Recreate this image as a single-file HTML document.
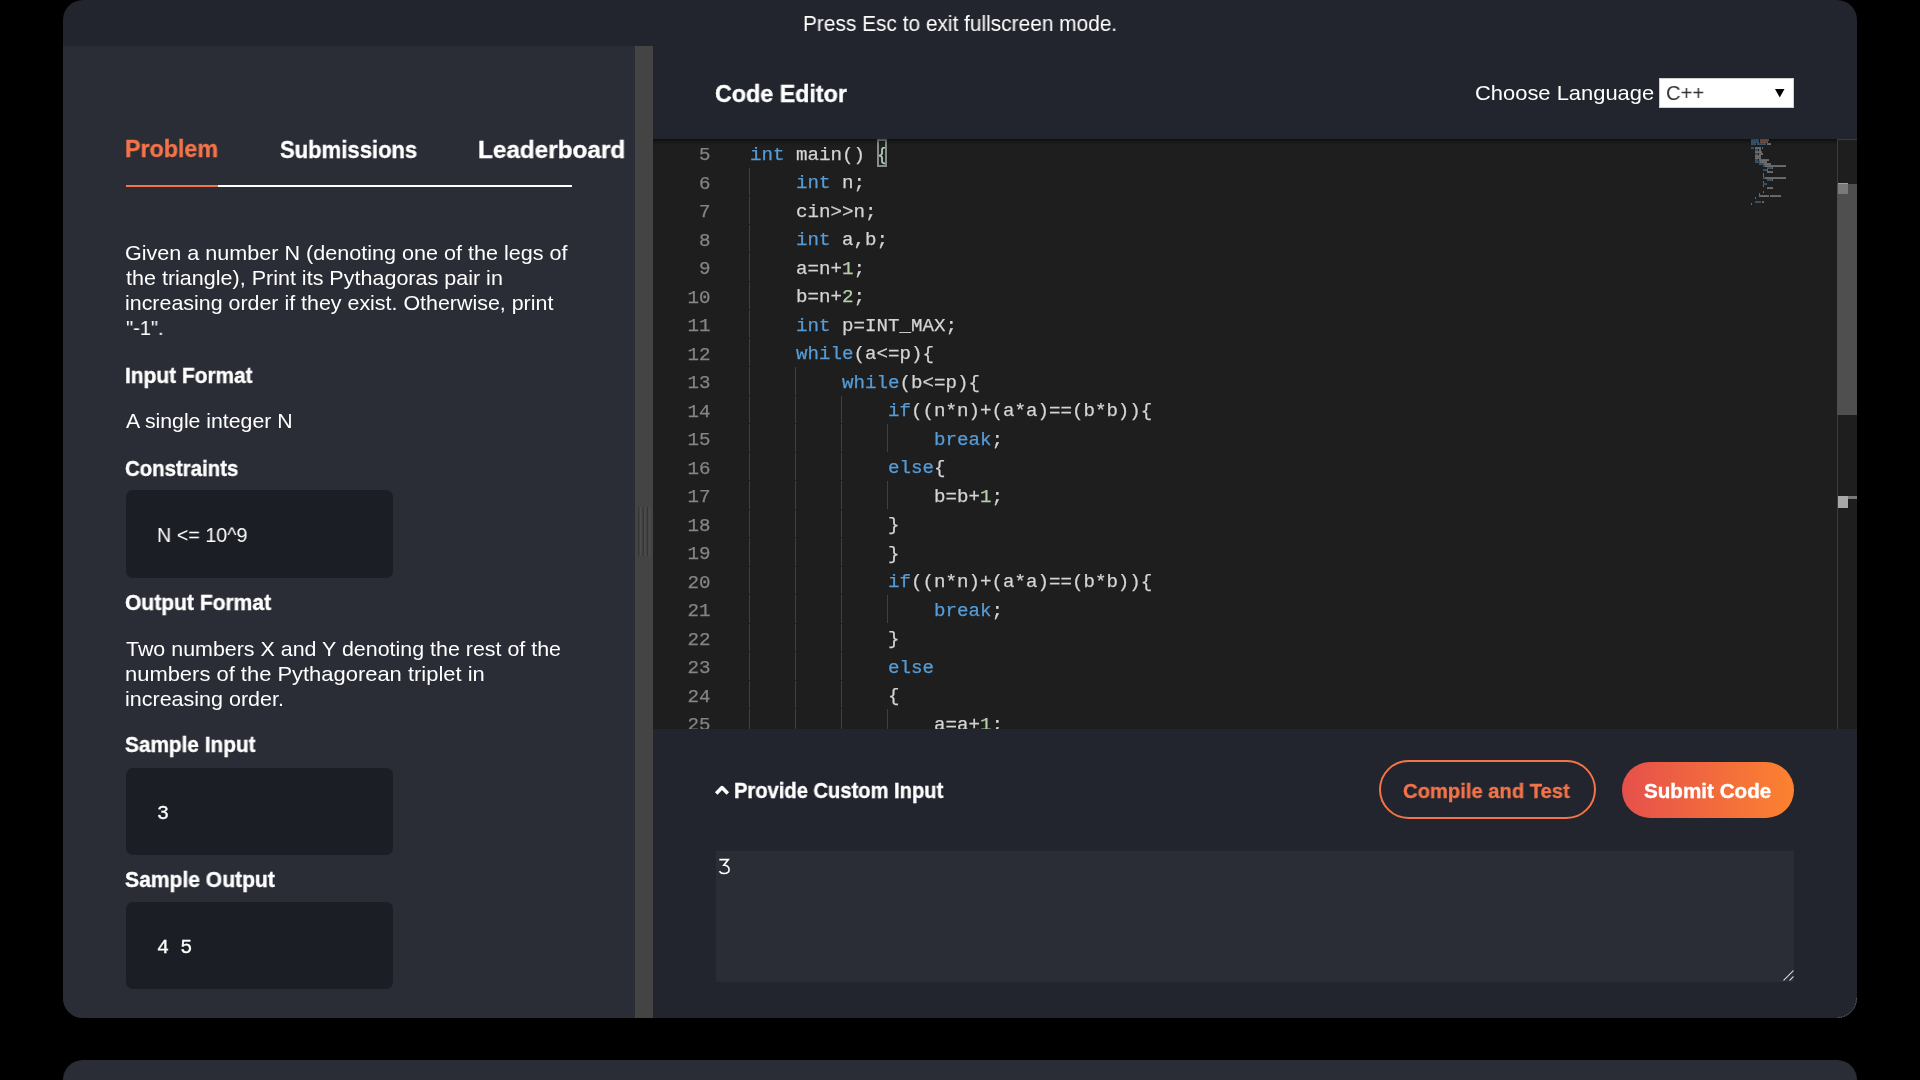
<!DOCTYPE html>
<html><head><meta charset="utf-8"><style>
html,body{margin:0;padding:0;width:1920px;height:1080px;overflow:hidden;background:#000;}
.t{position:absolute;white-space:nowrap;will-change:transform;}
.b{position:absolute;}
</style></head><body>
<div class="b" style="left:63px;top:0px;width:1794px;height:1018px;background:#22252d;border-radius:20px;"></div>
<div class="b" style="left:63px;top:1060px;width:1794px;height:40px;background:#2a2d35;border-radius:20px;"></div>
<div class="b" style="left:63px;top:46px;width:572px;height:972px;background:#2a2d35;border-bottom-left-radius:20px;"></div>
<div class="b" style="left:635px;top:46px;width:18px;height:972px;background:#444444;"></div>
<svg class="b" style="left:635px;top:507px" width="18" height="49"><rect x="3.1" y="0" width="1.1" height="49" fill="#363636"/><rect x="4.9" y="0" width="1.1" height="49" fill="#4e4e4e"/><rect x="7.8" y="0" width="1.1" height="49" fill="#363636"/><rect x="9.4" y="0" width="1.1" height="49" fill="#4e4e4e"/><rect x="11.9" y="0" width="1.1" height="49" fill="#363636"/><rect x="14" y="0" width="1.1" height="49" fill="#4e4e4e"/></svg>
<div class="b" style="left:653px;top:139px;width:1204px;height:590px;background:#1e1e1e;"></div>
<div class="b" style="left:653px;top:729px;width:1204px;height:289px;background:#22252d;border-bottom-right-radius:20px;"></div>
<svg class="b" style="left:1830px;top:990px" width="30" height="30"><path d="M26.6 8A19.6 19.6 0 0 1 7 27.6" stroke="#9a9a9a" stroke-width="0.9" fill="none" stroke-dasharray="1.6 1.2" opacity="0.6"/></svg>
<div class="t" style="left:803.09px;top:14.09px;font-size:21.51px;line-height:21.51px;color:#fff;font-weight:400;font-family:'Liberation Sans', sans-serif;transform:scaleX(0.9701);transform-origin:0 0;">Press Esc to exit fullscreen mode.</div>
<div class="t" style="left:715.04px;top:82.11px;font-size:24.56px;line-height:24.56px;color:#fff;font-weight:700;font-family:'Liberation Sans', sans-serif;transform:scaleX(0.9484);transform-origin:0 0;-webkit-text-stroke:0.35px currentColor;">Code Editor</div>
<div class="t" style="left:1474.79px;top:81.97px;font-size:21.0px;line-height:21.0px;color:#fff;font-weight:400;font-family:'Liberation Sans', sans-serif;transform:scaleX(1.0438);transform-origin:0 0;">Choose Language</div>
<div class="b" style="left:1659px;top:78px;width:135px;height:30px;background:#ffffff;box-sizing:border-box;border:1px solid #cfcfcf;"></div>
<div class="t" style="left:1666.07px;top:81.86px;font-size:21.08px;line-height:21.08px;color:#333;font-weight:400;font-family:'Liberation Sans', sans-serif;transform:scaleX(0.9595);transform-origin:0 0;">C++</div>
<svg class="b" style="left:1775px;top:89px" width="10" height="9"><path d="M0 0H9.5L4.75 8.5Z" fill="#000"/></svg>
<div class="t" style="left:125.34px;top:136.83px;font-size:24.42px;line-height:24.42px;color:#f4744a;font-weight:700;font-family:'Liberation Sans', sans-serif;transform:scaleX(0.9529);transform-origin:0 0;-webkit-text-stroke:0.35px currentColor;">Problem</div>
<div class="t" style="left:279.96px;top:137.61px;font-size:24.56px;line-height:24.56px;color:#fff;font-weight:700;font-family:'Liberation Sans', sans-serif;transform:scaleX(0.8984);transform-origin:0 0;-webkit-text-stroke:0.35px currentColor;">Submissions</div>
<div class="t" style="left:478.37px;top:138.21px;font-size:24.56px;line-height:24.56px;color:#fff;font-weight:700;font-family:'Liberation Sans', sans-serif;transform:scaleX(0.9895);transform-origin:0 0;-webkit-text-stroke:0.35px currentColor;">Leaderboard</div>
<div class="b" style="left:126px;top:185px;width:446px;height:2px;background:#ffffff;"></div>
<div class="b" style="left:126px;top:185px;width:92px;height:2px;background:#f4744a;"></div>
<div class="t" style="left:125.21px;top:242.78px;font-size:20.93px;line-height:20.93px;color:#fff;font-weight:400;font-family:'Liberation Sans', sans-serif;transform:scaleX(1.0313);transform-origin:0 0;">Given a number N (denoting one of the legs of</div>
<div class="t" style="left:126.07px;top:267.78px;font-size:20.93px;line-height:20.93px;color:#fff;font-weight:400;font-family:'Liberation Sans', sans-serif;transform:scaleX(1.0288);transform-origin:0 0;">the triangle), Print its Pythagoras pair in</div>
<div class="t" style="left:124.97px;top:292.78px;font-size:20.93px;line-height:20.93px;color:#fff;font-weight:400;font-family:'Liberation Sans', sans-serif;transform:scaleX(1.0232);transform-origin:0 0;">increasing order if they exist. Otherwise, print</div>
<div class="t" style="left:125.55px;top:317.78px;font-size:20.93px;line-height:20.93px;color:#fff;font-weight:400;font-family:'Liberation Sans', sans-serif;transform:scaleX(0.9566);transform-origin:0 0;">&quot;-1&quot;.</div>
<div class="t" style="left:124.6px;top:364.96px;font-size:21.66px;line-height:21.66px;color:#fff;font-weight:700;font-family:'Liberation Sans', sans-serif;transform:scaleX(0.9646);transform-origin:0 0;-webkit-text-stroke:0.35px currentColor;">Input Format</div>
<div class="t" style="left:125.96px;top:410.68px;font-size:20.93px;line-height:20.93px;color:#fff;font-weight:400;font-family:'Liberation Sans', sans-serif;transform:scaleX(1.0156);transform-origin:0 0;">A single integer N</div>
<div class="t" style="left:125.16px;top:457.54px;font-size:21.22px;line-height:21.22px;color:#fff;font-weight:700;font-family:'Liberation Sans', sans-serif;transform:scaleX(0.9616);transform-origin:0 0;-webkit-text-stroke:0.35px currentColor;">Constraints</div>
<div class="b" style="left:126px;top:490px;width:267px;height:88px;background:#1c1e25;border-radius:7px;"></div>
<div class="t" style="left:157.28px;top:525.28px;font-size:20.93px;line-height:20.93px;color:#fff;font-weight:400;font-family:'Liberation Sans', sans-serif;transform:scaleX(0.9429);transform-origin:0 0;">N &lt;= 10^9</div>
<div class="t" style="left:125.14px;top:592.51px;font-size:21.37px;line-height:21.37px;color:#fff;font-weight:700;font-family:'Liberation Sans', sans-serif;transform:scaleX(0.9849);transform-origin:0 0;-webkit-text-stroke:0.35px currentColor;">Output Format</div>
<div class="t" style="left:125.82px;top:638.88px;font-size:20.93px;line-height:20.93px;color:#fff;font-weight:400;font-family:'Liberation Sans', sans-serif;transform:scaleX(1.0237);transform-origin:0 0;">Two numbers X and Y denoting the rest of the</div>
<div class="t" style="left:124.84px;top:663.88px;font-size:20.93px;line-height:20.93px;color:#fff;font-weight:400;font-family:'Liberation Sans', sans-serif;transform:scaleX(1.0485);transform-origin:0 0;">numbers of the Pythagorean triplet in</div>
<div class="t" style="left:124.86px;top:688.88px;font-size:20.93px;line-height:20.93px;color:#fff;font-weight:400;font-family:'Liberation Sans', sans-serif;transform:scaleX(1.0276);transform-origin:0 0;">increasing order.</div>
<div class="t" style="left:125.4px;top:735.21px;font-size:21.37px;line-height:21.37px;color:#fff;font-weight:700;font-family:'Liberation Sans', sans-serif;transform:scaleX(0.9732);transform-origin:0 0;-webkit-text-stroke:0.35px currentColor;">Sample Input</div>
<div class="b" style="left:126px;top:768px;width:267px;height:87px;background:#1c1e25;border-radius:7px;"></div>
<div class="t" style="left:157.2px;top:803.97px;font-size:20px;line-height:20px;color:#ffffff;font-weight:400;font-family:'Liberation Mono', monospace;-webkit-text-stroke:0.3px #fff;">3</div>
<div class="t" style="left:125.39px;top:869.24px;font-size:21.22px;line-height:21.22px;color:#fff;font-weight:700;font-family:'Liberation Sans', sans-serif;transform:scaleX(0.9931);transform-origin:0 0;-webkit-text-stroke:0.35px currentColor;">Sample Output</div>
<div class="b" style="left:126px;top:902px;width:267px;height:87px;background:#1c1e25;border-radius:7px;"></div>
<div class="t" style="left:156.7px;top:937.87px;font-size:20px;line-height:20px;color:#ffffff;font-weight:400;font-family:'Liberation Mono', monospace;letter-spacing:-0.4px;-webkit-text-stroke:0.3px #fff;">4 5</div>
<div class="b" style="left:653px;top:139px;width:1204px;height:590px;overflow:hidden"><div class="t" style="left:0.5px;width:56.5px;text-align:right;-webkit-text-stroke:0.25px currentColor;top:7.21px;font-size:19.1667px;line-height:19.1667px;font-family:'Liberation Mono', monospace;color:#858585">5</div><div class="t" style="left:96.5px;top:6.61px;-webkit-text-stroke:0.25px currentColor;font-size:19.1667px;line-height:19.1667px;font-family:'Liberation Mono', monospace;white-space:pre"><span style="color:#569cd6">int</span><span style="color:#d4d4d4"> main() </span><span style="color:#d4d4d4">{</span></div><div class="t" style="left:0.5px;width:56.5px;text-align:right;-webkit-text-stroke:0.25px currentColor;top:35.71px;font-size:19.1667px;line-height:19.1667px;font-family:'Liberation Mono', monospace;color:#858585">6</div><div class="t" style="left:96.5px;top:35.11px;-webkit-text-stroke:0.25px currentColor;font-size:19.1667px;line-height:19.1667px;font-family:'Liberation Mono', monospace;white-space:pre"><span style="color:#d4d4d4">    </span><span style="color:#569cd6">int</span><span style="color:#d4d4d4"> n;</span></div><div class="b" style="left:96.0px;top:28.5px;width:1px;height:27.5px;background:#404040"></div><div class="t" style="left:0.5px;width:56.5px;text-align:right;-webkit-text-stroke:0.25px currentColor;top:64.21px;font-size:19.1667px;line-height:19.1667px;font-family:'Liberation Mono', monospace;color:#858585">7</div><div class="t" style="left:96.5px;top:63.61px;-webkit-text-stroke:0.25px currentColor;font-size:19.1667px;line-height:19.1667px;font-family:'Liberation Mono', monospace;white-space:pre"><span style="color:#d4d4d4">    cin&gt;&gt;n;</span></div><div class="b" style="left:96.0px;top:57.0px;width:1px;height:27.5px;background:#404040"></div><div class="t" style="left:0.5px;width:56.5px;text-align:right;-webkit-text-stroke:0.25px currentColor;top:92.71px;font-size:19.1667px;line-height:19.1667px;font-family:'Liberation Mono', monospace;color:#858585">8</div><div class="t" style="left:96.5px;top:92.11px;-webkit-text-stroke:0.25px currentColor;font-size:19.1667px;line-height:19.1667px;font-family:'Liberation Mono', monospace;white-space:pre"><span style="color:#d4d4d4">    </span><span style="color:#569cd6">int</span><span style="color:#d4d4d4"> a,b;</span></div><div class="b" style="left:96.0px;top:85.5px;width:1px;height:27.5px;background:#404040"></div><div class="t" style="left:0.5px;width:56.5px;text-align:right;-webkit-text-stroke:0.25px currentColor;top:121.21px;font-size:19.1667px;line-height:19.1667px;font-family:'Liberation Mono', monospace;color:#858585">9</div><div class="t" style="left:96.5px;top:120.61px;-webkit-text-stroke:0.25px currentColor;font-size:19.1667px;line-height:19.1667px;font-family:'Liberation Mono', monospace;white-space:pre"><span style="color:#d4d4d4">    a=n+</span><span style="color:#b5cea8">1</span><span style="color:#d4d4d4">;</span></div><div class="b" style="left:96.0px;top:114.0px;width:1px;height:27.5px;background:#404040"></div><div class="t" style="left:0.5px;width:56.5px;text-align:right;-webkit-text-stroke:0.25px currentColor;top:149.71px;font-size:19.1667px;line-height:19.1667px;font-family:'Liberation Mono', monospace;color:#858585">10</div><div class="t" style="left:96.5px;top:149.11px;-webkit-text-stroke:0.25px currentColor;font-size:19.1667px;line-height:19.1667px;font-family:'Liberation Mono', monospace;white-space:pre"><span style="color:#d4d4d4">    b=n+</span><span style="color:#b5cea8">2</span><span style="color:#d4d4d4">;</span></div><div class="b" style="left:96.0px;top:142.5px;width:1px;height:27.5px;background:#404040"></div><div class="t" style="left:0.5px;width:56.5px;text-align:right;-webkit-text-stroke:0.25px currentColor;top:178.21px;font-size:19.1667px;line-height:19.1667px;font-family:'Liberation Mono', monospace;color:#858585">11</div><div class="t" style="left:96.5px;top:177.61px;-webkit-text-stroke:0.25px currentColor;font-size:19.1667px;line-height:19.1667px;font-family:'Liberation Mono', monospace;white-space:pre"><span style="color:#d4d4d4">    </span><span style="color:#569cd6">int</span><span style="color:#d4d4d4"> p=INT_MAX;</span></div><div class="b" style="left:96.0px;top:171.0px;width:1px;height:27.5px;background:#404040"></div><div class="t" style="left:0.5px;width:56.5px;text-align:right;-webkit-text-stroke:0.25px currentColor;top:206.71px;font-size:19.1667px;line-height:19.1667px;font-family:'Liberation Mono', monospace;color:#858585">12</div><div class="t" style="left:96.5px;top:206.11px;-webkit-text-stroke:0.25px currentColor;font-size:19.1667px;line-height:19.1667px;font-family:'Liberation Mono', monospace;white-space:pre"><span style="color:#d4d4d4">    </span><span style="color:#569cd6">while</span><span style="color:#d4d4d4">(a&lt;=p){</span></div><div class="b" style="left:96.0px;top:199.5px;width:1px;height:27.5px;background:#404040"></div><div class="t" style="left:0.5px;width:56.5px;text-align:right;-webkit-text-stroke:0.25px currentColor;top:235.21px;font-size:19.1667px;line-height:19.1667px;font-family:'Liberation Mono', monospace;color:#858585">13</div><div class="t" style="left:96.5px;top:234.61px;-webkit-text-stroke:0.25px currentColor;font-size:19.1667px;line-height:19.1667px;font-family:'Liberation Mono', monospace;white-space:pre"><span style="color:#d4d4d4">        </span><span style="color:#569cd6">while</span><span style="color:#d4d4d4">(b&lt;=p){</span></div><div class="b" style="left:96.0px;top:228.0px;width:1px;height:27.5px;background:#404040"></div><div class="b" style="left:142.0px;top:228.0px;width:1px;height:27.5px;background:#404040"></div><div class="t" style="left:0.5px;width:56.5px;text-align:right;-webkit-text-stroke:0.25px currentColor;top:263.71px;font-size:19.1667px;line-height:19.1667px;font-family:'Liberation Mono', monospace;color:#858585">14</div><div class="t" style="left:96.5px;top:263.11px;-webkit-text-stroke:0.25px currentColor;font-size:19.1667px;line-height:19.1667px;font-family:'Liberation Mono', monospace;white-space:pre"><span style="color:#d4d4d4">            </span><span style="color:#569cd6">if</span><span style="color:#d4d4d4">((n*n)+(a*a)==(b*b)){</span></div><div class="b" style="left:96.0px;top:256.5px;width:1px;height:27.5px;background:#404040"></div><div class="b" style="left:142.0px;top:256.5px;width:1px;height:27.5px;background:#404040"></div><div class="b" style="left:188.0px;top:256.5px;width:1px;height:27.5px;background:#404040"></div><div class="t" style="left:0.5px;width:56.5px;text-align:right;-webkit-text-stroke:0.25px currentColor;top:292.21px;font-size:19.1667px;line-height:19.1667px;font-family:'Liberation Mono', monospace;color:#858585">15</div><div class="t" style="left:96.5px;top:291.61px;-webkit-text-stroke:0.25px currentColor;font-size:19.1667px;line-height:19.1667px;font-family:'Liberation Mono', monospace;white-space:pre"><span style="color:#d4d4d4">                </span><span style="color:#569cd6">break</span><span style="color:#d4d4d4">;</span></div><div class="b" style="left:96.0px;top:285.0px;width:1px;height:27.5px;background:#404040"></div><div class="b" style="left:142.0px;top:285.0px;width:1px;height:27.5px;background:#404040"></div><div class="b" style="left:188.0px;top:285.0px;width:1px;height:27.5px;background:#404040"></div><div class="b" style="left:234.0px;top:285.0px;width:1px;height:27.5px;background:#404040"></div><div class="t" style="left:0.5px;width:56.5px;text-align:right;-webkit-text-stroke:0.25px currentColor;top:320.71px;font-size:19.1667px;line-height:19.1667px;font-family:'Liberation Mono', monospace;color:#858585">16</div><div class="t" style="left:96.5px;top:320.11px;-webkit-text-stroke:0.25px currentColor;font-size:19.1667px;line-height:19.1667px;font-family:'Liberation Mono', monospace;white-space:pre"><span style="color:#d4d4d4">            </span><span style="color:#569cd6">else</span><span style="color:#d4d4d4">{</span></div><div class="b" style="left:96.0px;top:313.5px;width:1px;height:27.5px;background:#404040"></div><div class="b" style="left:142.0px;top:313.5px;width:1px;height:27.5px;background:#404040"></div><div class="b" style="left:188.0px;top:313.5px;width:1px;height:27.5px;background:#404040"></div><div class="t" style="left:0.5px;width:56.5px;text-align:right;-webkit-text-stroke:0.25px currentColor;top:349.21px;font-size:19.1667px;line-height:19.1667px;font-family:'Liberation Mono', monospace;color:#858585">17</div><div class="t" style="left:96.5px;top:348.61px;-webkit-text-stroke:0.25px currentColor;font-size:19.1667px;line-height:19.1667px;font-family:'Liberation Mono', monospace;white-space:pre"><span style="color:#d4d4d4">                b=b+</span><span style="color:#b5cea8">1</span><span style="color:#d4d4d4">;</span></div><div class="b" style="left:96.0px;top:342.0px;width:1px;height:27.5px;background:#404040"></div><div class="b" style="left:142.0px;top:342.0px;width:1px;height:27.5px;background:#404040"></div><div class="b" style="left:188.0px;top:342.0px;width:1px;height:27.5px;background:#404040"></div><div class="b" style="left:234.0px;top:342.0px;width:1px;height:27.5px;background:#404040"></div><div class="t" style="left:0.5px;width:56.5px;text-align:right;-webkit-text-stroke:0.25px currentColor;top:377.71px;font-size:19.1667px;line-height:19.1667px;font-family:'Liberation Mono', monospace;color:#858585">18</div><div class="t" style="left:96.5px;top:377.11px;-webkit-text-stroke:0.25px currentColor;font-size:19.1667px;line-height:19.1667px;font-family:'Liberation Mono', monospace;white-space:pre"><span style="color:#d4d4d4">            }</span></div><div class="b" style="left:96.0px;top:370.5px;width:1px;height:27.5px;background:#404040"></div><div class="b" style="left:142.0px;top:370.5px;width:1px;height:27.5px;background:#404040"></div><div class="b" style="left:188.0px;top:370.5px;width:1px;height:27.5px;background:#404040"></div><div class="t" style="left:0.5px;width:56.5px;text-align:right;-webkit-text-stroke:0.25px currentColor;top:406.21px;font-size:19.1667px;line-height:19.1667px;font-family:'Liberation Mono', monospace;color:#858585">19</div><div class="t" style="left:96.5px;top:405.61px;-webkit-text-stroke:0.25px currentColor;font-size:19.1667px;line-height:19.1667px;font-family:'Liberation Mono', monospace;white-space:pre"><span style="color:#d4d4d4">            }</span></div><div class="b" style="left:96.0px;top:399.0px;width:1px;height:27.5px;background:#404040"></div><div class="b" style="left:142.0px;top:399.0px;width:1px;height:27.5px;background:#404040"></div><div class="b" style="left:188.0px;top:399.0px;width:1px;height:27.5px;background:#404040"></div><div class="t" style="left:0.5px;width:56.5px;text-align:right;-webkit-text-stroke:0.25px currentColor;top:434.71px;font-size:19.1667px;line-height:19.1667px;font-family:'Liberation Mono', monospace;color:#858585">20</div><div class="t" style="left:96.5px;top:434.11px;-webkit-text-stroke:0.25px currentColor;font-size:19.1667px;line-height:19.1667px;font-family:'Liberation Mono', monospace;white-space:pre"><span style="color:#d4d4d4">            </span><span style="color:#569cd6">if</span><span style="color:#d4d4d4">((n*n)+(a*a)==(b*b)){</span></div><div class="b" style="left:96.0px;top:427.5px;width:1px;height:27.5px;background:#404040"></div><div class="b" style="left:142.0px;top:427.5px;width:1px;height:27.5px;background:#404040"></div><div class="b" style="left:188.0px;top:427.5px;width:1px;height:27.5px;background:#404040"></div><div class="t" style="left:0.5px;width:56.5px;text-align:right;-webkit-text-stroke:0.25px currentColor;top:463.21px;font-size:19.1667px;line-height:19.1667px;font-family:'Liberation Mono', monospace;color:#858585">21</div><div class="t" style="left:96.5px;top:462.61px;-webkit-text-stroke:0.25px currentColor;font-size:19.1667px;line-height:19.1667px;font-family:'Liberation Mono', monospace;white-space:pre"><span style="color:#d4d4d4">                </span><span style="color:#569cd6">break</span><span style="color:#d4d4d4">;</span></div><div class="b" style="left:96.0px;top:456.0px;width:1px;height:27.5px;background:#404040"></div><div class="b" style="left:142.0px;top:456.0px;width:1px;height:27.5px;background:#404040"></div><div class="b" style="left:188.0px;top:456.0px;width:1px;height:27.5px;background:#404040"></div><div class="b" style="left:234.0px;top:456.0px;width:1px;height:27.5px;background:#404040"></div><div class="t" style="left:0.5px;width:56.5px;text-align:right;-webkit-text-stroke:0.25px currentColor;top:491.71px;font-size:19.1667px;line-height:19.1667px;font-family:'Liberation Mono', monospace;color:#858585">22</div><div class="t" style="left:96.5px;top:491.11px;-webkit-text-stroke:0.25px currentColor;font-size:19.1667px;line-height:19.1667px;font-family:'Liberation Mono', monospace;white-space:pre"><span style="color:#d4d4d4">            }</span></div><div class="b" style="left:96.0px;top:484.5px;width:1px;height:27.5px;background:#404040"></div><div class="b" style="left:142.0px;top:484.5px;width:1px;height:27.5px;background:#404040"></div><div class="b" style="left:188.0px;top:484.5px;width:1px;height:27.5px;background:#404040"></div><div class="t" style="left:0.5px;width:56.5px;text-align:right;-webkit-text-stroke:0.25px currentColor;top:520.21px;font-size:19.1667px;line-height:19.1667px;font-family:'Liberation Mono', monospace;color:#858585">23</div><div class="t" style="left:96.5px;top:519.61px;-webkit-text-stroke:0.25px currentColor;font-size:19.1667px;line-height:19.1667px;font-family:'Liberation Mono', monospace;white-space:pre"><span style="color:#d4d4d4">            </span><span style="color:#569cd6">else</span></div><div class="b" style="left:96.0px;top:513.0px;width:1px;height:27.5px;background:#404040"></div><div class="b" style="left:142.0px;top:513.0px;width:1px;height:27.5px;background:#404040"></div><div class="b" style="left:188.0px;top:513.0px;width:1px;height:27.5px;background:#404040"></div><div class="t" style="left:0.5px;width:56.5px;text-align:right;-webkit-text-stroke:0.25px currentColor;top:548.71px;font-size:19.1667px;line-height:19.1667px;font-family:'Liberation Mono', monospace;color:#858585">24</div><div class="t" style="left:96.5px;top:548.11px;-webkit-text-stroke:0.25px currentColor;font-size:19.1667px;line-height:19.1667px;font-family:'Liberation Mono', monospace;white-space:pre"><span style="color:#d4d4d4">            {</span></div><div class="b" style="left:96.0px;top:541.5px;width:1px;height:27.5px;background:#404040"></div><div class="b" style="left:142.0px;top:541.5px;width:1px;height:27.5px;background:#404040"></div><div class="b" style="left:188.0px;top:541.5px;width:1px;height:27.5px;background:#404040"></div><div class="t" style="left:0.5px;width:56.5px;text-align:right;-webkit-text-stroke:0.25px currentColor;top:577.21px;font-size:19.1667px;line-height:19.1667px;font-family:'Liberation Mono', monospace;color:#858585">25</div><div class="t" style="left:96.5px;top:576.61px;-webkit-text-stroke:0.25px currentColor;font-size:19.1667px;line-height:19.1667px;font-family:'Liberation Mono', monospace;white-space:pre"><span style="color:#d4d4d4">                a=a+</span><span style="color:#b5cea8">1</span><span style="color:#d4d4d4">;</span></div><div class="b" style="left:96.0px;top:570.0px;width:1px;height:27.5px;background:#404040"></div><div class="b" style="left:142.0px;top:570.0px;width:1px;height:27.5px;background:#404040"></div><div class="b" style="left:188.0px;top:570.0px;width:1px;height:27.5px;background:#404040"></div><div class="b" style="left:234.0px;top:570.0px;width:1px;height:27.5px;background:#404040"></div><div class="b" style="left:224px;top:0px;width:10px;height:28px;box-sizing:border-box;border:2px solid #8a8a8a;background:rgba(0,100,0,0.1)"></div></div>
<div class="b" style="left:653px;top:139px;width:1184px;height:6px;box-shadow:#000 0 6px 6px -6px inset"></div>
<div class="b" style="left:1837px;top:139px;width:1px;height:590px;background:#3c3c3c;"></div>
<div class="b" style="left:1837px;top:139px;width:20px;height:1px;background:#3a3a3a;"></div>
<div class="b" style="left:1837px;top:184px;width:20px;height:231px;background:#4f4f4f;"></div>
<div class="b" style="left:1838px;top:184px;width:10px;height:10px;background:#7a7a7a;"></div>
<div class="b" style="left:1838px;top:183px;width:10px;height:1px;background:#a0a0a0;"></div>
<div class="b" style="left:1838px;top:496px;width:19px;height:3px;background:#7a7a7a;"></div>
<div class="b" style="left:1838px;top:496px;width:10px;height:12px;background:#a8a8a8;"></div>
<svg class="b" style="left:1751px;top:139px" width="60" height="70"><rect x="0" y="0.3" width="1" height="1.5" fill="#569cd6" opacity="0.55"/><rect x="1" y="0.3" width="1" height="1.5" fill="#569cd6" opacity="0.55"/><rect x="2" y="0.3" width="1" height="1.5" fill="#569cd6" opacity="0.55"/><rect x="3" y="0.3" width="1" height="1.5" fill="#569cd6" opacity="0.55"/><rect x="4" y="0.3" width="1" height="1.5" fill="#569cd6" opacity="0.55"/><rect x="5" y="0.3" width="1" height="1.5" fill="#569cd6" opacity="0.55"/><rect x="6" y="0.3" width="1" height="1.5" fill="#569cd6" opacity="0.55"/><rect x="7" y="0.3" width="1" height="1.5" fill="#569cd6" opacity="0.55"/><rect x="9" y="0.3" width="1" height="1.5" fill="#ce9178" opacity="0.55"/><rect x="10" y="0.3" width="1" height="1.5" fill="#ce9178" opacity="0.55"/><rect x="11" y="0.3" width="1" height="1.5" fill="#ce9178" opacity="0.55"/><rect x="12" y="0.3" width="1" height="1.5" fill="#ce9178" opacity="0.55"/><rect x="13" y="0.3" width="1" height="1.5" fill="#ce9178" opacity="0.55"/><rect x="14" y="0.3" width="1" height="1.5" fill="#ce9178" opacity="0.55"/><rect x="15" y="0.3" width="1" height="1.5" fill="#ce9178" opacity="0.55"/><rect x="16" y="0.3" width="1" height="1.5" fill="#ce9178" opacity="0.55"/><rect x="17" y="0.3" width="1" height="1.5" fill="#ce9178" opacity="0.55"/><rect x="0" y="2.3" width="1" height="1.5" fill="#569cd6" opacity="0.55"/><rect x="1" y="2.3" width="1" height="1.5" fill="#569cd6" opacity="0.55"/><rect x="2" y="2.3" width="1" height="1.5" fill="#569cd6" opacity="0.55"/><rect x="3" y="2.3" width="1" height="1.5" fill="#569cd6" opacity="0.55"/><rect x="4" y="2.3" width="1" height="1.5" fill="#569cd6" opacity="0.55"/><rect x="5" y="2.3" width="1" height="1.5" fill="#569cd6" opacity="0.55"/><rect x="6" y="2.3" width="1" height="1.5" fill="#569cd6" opacity="0.55"/><rect x="7" y="2.3" width="1" height="1.5" fill="#569cd6" opacity="0.55"/><rect x="9" y="2.3" width="1" height="1.5" fill="#ce9178" opacity="0.55"/><rect x="10" y="2.3" width="1" height="1.5" fill="#ce9178" opacity="0.55"/><rect x="11" y="2.3" width="1" height="1.5" fill="#ce9178" opacity="0.55"/><rect x="12" y="2.3" width="1" height="1.5" fill="#ce9178" opacity="0.55"/><rect x="13" y="2.3" width="1" height="1.5" fill="#ce9178" opacity="0.55"/><rect x="14" y="2.3" width="1" height="1.5" fill="#ce9178" opacity="0.55"/><rect x="15" y="2.3" width="1" height="1.5" fill="#ce9178" opacity="0.55"/><rect x="16" y="2.3" width="1" height="1.5" fill="#ce9178" opacity="0.55"/><rect x="0" y="4.3" width="1" height="1.5" fill="#569cd6" opacity="0.55"/><rect x="1" y="4.3" width="1" height="1.5" fill="#569cd6" opacity="0.55"/><rect x="2" y="4.3" width="1" height="1.5" fill="#569cd6" opacity="0.55"/><rect x="3" y="4.3" width="1" height="1.5" fill="#569cd6" opacity="0.55"/><rect x="4" y="4.3" width="1" height="1.5" fill="#569cd6" opacity="0.55"/><rect x="6" y="4.3" width="1" height="1.5" fill="#569cd6" opacity="0.55"/><rect x="7" y="4.3" width="1" height="1.5" fill="#569cd6" opacity="0.55"/><rect x="8" y="4.3" width="1" height="1.5" fill="#569cd6" opacity="0.55"/><rect x="9" y="4.3" width="1" height="1.5" fill="#569cd6" opacity="0.55"/><rect x="10" y="4.3" width="1" height="1.5" fill="#569cd6" opacity="0.55"/><rect x="11" y="4.3" width="1" height="1.5" fill="#569cd6" opacity="0.55"/><rect x="12" y="4.3" width="1" height="1.5" fill="#569cd6" opacity="0.55"/><rect x="13" y="4.3" width="1" height="1.5" fill="#569cd6" opacity="0.55"/><rect x="14" y="4.3" width="1" height="1.5" fill="#569cd6" opacity="0.55"/><rect x="16" y="4.3" width="1" height="1.5" fill="#d4d4d4" opacity="0.55"/><rect x="17" y="4.3" width="1" height="1.5" fill="#d4d4d4" opacity="0.55"/><rect x="18" y="4.3" width="1" height="1.5" fill="#d4d4d4" opacity="0.55"/><rect x="19" y="4.3" width="1" height="1.5" fill="#d4d4d4" opacity="0.55"/><rect x="0" y="8.3" width="1" height="1.5" fill="#569cd6" opacity="0.55"/><rect x="1" y="8.3" width="1" height="1.5" fill="#569cd6" opacity="0.55"/><rect x="2" y="8.3" width="1" height="1.5" fill="#569cd6" opacity="0.55"/><rect x="4" y="8.3" width="1" height="1.5" fill="#d4d4d4" opacity="0.55"/><rect x="5" y="8.3" width="1" height="1.5" fill="#d4d4d4" opacity="0.55"/><rect x="6" y="8.3" width="1" height="1.5" fill="#d4d4d4" opacity="0.55"/><rect x="7" y="8.3" width="1" height="1.5" fill="#d4d4d4" opacity="0.55"/><rect x="8" y="8.3" width="1" height="1.5" fill="#d4d4d4" opacity="0.55"/><rect x="9" y="8.3" width="1" height="1.5" fill="#d4d4d4" opacity="0.55"/><rect x="11" y="8.3" width="1" height="1.5" fill="#d4d4d4" opacity="0.55"/><rect x="4" y="10.3" width="1" height="1.5" fill="#569cd6" opacity="0.55"/><rect x="5" y="10.3" width="1" height="1.5" fill="#569cd6" opacity="0.55"/><rect x="6" y="10.3" width="1" height="1.5" fill="#569cd6" opacity="0.55"/><rect x="8" y="10.3" width="1" height="1.5" fill="#d4d4d4" opacity="0.55"/><rect x="9" y="10.3" width="1" height="1.5" fill="#d4d4d4" opacity="0.55"/><rect x="4" y="12.3" width="1" height="1.5" fill="#d4d4d4" opacity="0.55"/><rect x="5" y="12.3" width="1" height="1.5" fill="#d4d4d4" opacity="0.55"/><rect x="6" y="12.3" width="1" height="1.5" fill="#d4d4d4" opacity="0.55"/><rect x="7" y="12.3" width="1" height="1.5" fill="#d4d4d4" opacity="0.55"/><rect x="8" y="12.3" width="1" height="1.5" fill="#d4d4d4" opacity="0.55"/><rect x="9" y="12.3" width="1" height="1.5" fill="#d4d4d4" opacity="0.55"/><rect x="10" y="12.3" width="1" height="1.5" fill="#d4d4d4" opacity="0.55"/><rect x="4" y="14.3" width="1" height="1.5" fill="#569cd6" opacity="0.55"/><rect x="5" y="14.3" width="1" height="1.5" fill="#569cd6" opacity="0.55"/><rect x="6" y="14.3" width="1" height="1.5" fill="#569cd6" opacity="0.55"/><rect x="8" y="14.3" width="1" height="1.5" fill="#d4d4d4" opacity="0.55"/><rect x="9" y="14.3" width="1" height="1.5" fill="#d4d4d4" opacity="0.55"/><rect x="10" y="14.3" width="1" height="1.5" fill="#d4d4d4" opacity="0.55"/><rect x="11" y="14.3" width="1" height="1.5" fill="#d4d4d4" opacity="0.55"/><rect x="4" y="16.3" width="1" height="1.5" fill="#d4d4d4" opacity="0.55"/><rect x="5" y="16.3" width="1" height="1.5" fill="#d4d4d4" opacity="0.55"/><rect x="6" y="16.3" width="1" height="1.5" fill="#d4d4d4" opacity="0.55"/><rect x="7" y="16.3" width="1" height="1.5" fill="#d4d4d4" opacity="0.55"/><rect x="8" y="16.3" width="1" height="1.5" fill="#d4d4d4" opacity="0.55"/><rect x="9" y="16.3" width="1" height="1.5" fill="#d4d4d4" opacity="0.55"/><rect x="4" y="18.3" width="1" height="1.5" fill="#d4d4d4" opacity="0.55"/><rect x="5" y="18.3" width="1" height="1.5" fill="#d4d4d4" opacity="0.55"/><rect x="6" y="18.3" width="1" height="1.5" fill="#d4d4d4" opacity="0.55"/><rect x="7" y="18.3" width="1" height="1.5" fill="#d4d4d4" opacity="0.55"/><rect x="8" y="18.3" width="1" height="1.5" fill="#d4d4d4" opacity="0.55"/><rect x="9" y="18.3" width="1" height="1.5" fill="#d4d4d4" opacity="0.55"/><rect x="4" y="20.3" width="1" height="1.5" fill="#569cd6" opacity="0.55"/><rect x="5" y="20.3" width="1" height="1.5" fill="#569cd6" opacity="0.55"/><rect x="6" y="20.3" width="1" height="1.5" fill="#569cd6" opacity="0.55"/><rect x="8" y="20.3" width="1" height="1.5" fill="#d4d4d4" opacity="0.55"/><rect x="9" y="20.3" width="1" height="1.5" fill="#d4d4d4" opacity="0.55"/><rect x="10" y="20.3" width="1" height="1.5" fill="#d4d4d4" opacity="0.55"/><rect x="11" y="20.3" width="1" height="1.5" fill="#d4d4d4" opacity="0.55"/><rect x="12" y="20.3" width="1" height="1.5" fill="#d4d4d4" opacity="0.55"/><rect x="13" y="20.3" width="1" height="1.5" fill="#d4d4d4" opacity="0.55"/><rect x="14" y="20.3" width="1" height="1.5" fill="#d4d4d4" opacity="0.55"/><rect x="15" y="20.3" width="1" height="1.5" fill="#d4d4d4" opacity="0.55"/><rect x="16" y="20.3" width="1" height="1.5" fill="#d4d4d4" opacity="0.55"/><rect x="17" y="20.3" width="1" height="1.5" fill="#d4d4d4" opacity="0.55"/><rect x="4" y="22.3" width="1" height="1.5" fill="#569cd6" opacity="0.55"/><rect x="5" y="22.3" width="1" height="1.5" fill="#569cd6" opacity="0.55"/><rect x="6" y="22.3" width="1" height="1.5" fill="#569cd6" opacity="0.55"/><rect x="7" y="22.3" width="1" height="1.5" fill="#569cd6" opacity="0.55"/><rect x="8" y="22.3" width="1" height="1.5" fill="#569cd6" opacity="0.55"/><rect x="9" y="22.3" width="1" height="1.5" fill="#d4d4d4" opacity="0.55"/><rect x="10" y="22.3" width="1" height="1.5" fill="#d4d4d4" opacity="0.55"/><rect x="11" y="22.3" width="1" height="1.5" fill="#d4d4d4" opacity="0.55"/><rect x="12" y="22.3" width="1" height="1.5" fill="#d4d4d4" opacity="0.55"/><rect x="13" y="22.3" width="1" height="1.5" fill="#d4d4d4" opacity="0.55"/><rect x="14" y="22.3" width="1" height="1.5" fill="#d4d4d4" opacity="0.55"/><rect x="15" y="22.3" width="1" height="1.5" fill="#d4d4d4" opacity="0.55"/><rect x="8" y="24.3" width="1" height="1.5" fill="#569cd6" opacity="0.55"/><rect x="9" y="24.3" width="1" height="1.5" fill="#569cd6" opacity="0.55"/><rect x="10" y="24.3" width="1" height="1.5" fill="#569cd6" opacity="0.55"/><rect x="11" y="24.3" width="1" height="1.5" fill="#569cd6" opacity="0.55"/><rect x="12" y="24.3" width="1" height="1.5" fill="#569cd6" opacity="0.55"/><rect x="13" y="24.3" width="1" height="1.5" fill="#d4d4d4" opacity="0.55"/><rect x="14" y="24.3" width="1" height="1.5" fill="#d4d4d4" opacity="0.55"/><rect x="15" y="24.3" width="1" height="1.5" fill="#d4d4d4" opacity="0.55"/><rect x="16" y="24.3" width="1" height="1.5" fill="#d4d4d4" opacity="0.55"/><rect x="17" y="24.3" width="1" height="1.5" fill="#d4d4d4" opacity="0.55"/><rect x="18" y="24.3" width="1" height="1.5" fill="#d4d4d4" opacity="0.55"/><rect x="19" y="24.3" width="1" height="1.5" fill="#d4d4d4" opacity="0.55"/><rect x="12" y="26.3" width="1" height="1.5" fill="#569cd6" opacity="0.55"/><rect x="13" y="26.3" width="1" height="1.5" fill="#569cd6" opacity="0.55"/><rect x="14" y="26.3" width="1" height="1.5" fill="#d4d4d4" opacity="0.55"/><rect x="15" y="26.3" width="1" height="1.5" fill="#d4d4d4" opacity="0.55"/><rect x="16" y="26.3" width="1" height="1.5" fill="#d4d4d4" opacity="0.55"/><rect x="17" y="26.3" width="1" height="1.5" fill="#d4d4d4" opacity="0.55"/><rect x="18" y="26.3" width="1" height="1.5" fill="#d4d4d4" opacity="0.55"/><rect x="19" y="26.3" width="1" height="1.5" fill="#d4d4d4" opacity="0.55"/><rect x="20" y="26.3" width="1" height="1.5" fill="#d4d4d4" opacity="0.55"/><rect x="21" y="26.3" width="1" height="1.5" fill="#d4d4d4" opacity="0.55"/><rect x="22" y="26.3" width="1" height="1.5" fill="#d4d4d4" opacity="0.55"/><rect x="23" y="26.3" width="1" height="1.5" fill="#d4d4d4" opacity="0.55"/><rect x="24" y="26.3" width="1" height="1.5" fill="#d4d4d4" opacity="0.55"/><rect x="25" y="26.3" width="1" height="1.5" fill="#d4d4d4" opacity="0.55"/><rect x="26" y="26.3" width="1" height="1.5" fill="#d4d4d4" opacity="0.55"/><rect x="27" y="26.3" width="1" height="1.5" fill="#d4d4d4" opacity="0.55"/><rect x="28" y="26.3" width="1" height="1.5" fill="#d4d4d4" opacity="0.55"/><rect x="29" y="26.3" width="1" height="1.5" fill="#d4d4d4" opacity="0.55"/><rect x="30" y="26.3" width="1" height="1.5" fill="#d4d4d4" opacity="0.55"/><rect x="31" y="26.3" width="1" height="1.5" fill="#d4d4d4" opacity="0.55"/><rect x="32" y="26.3" width="1" height="1.5" fill="#d4d4d4" opacity="0.55"/><rect x="33" y="26.3" width="1" height="1.5" fill="#d4d4d4" opacity="0.55"/><rect x="34" y="26.3" width="1" height="1.5" fill="#d4d4d4" opacity="0.55"/><rect x="16" y="28.3" width="1" height="1.5" fill="#569cd6" opacity="0.55"/><rect x="17" y="28.3" width="1" height="1.5" fill="#569cd6" opacity="0.55"/><rect x="18" y="28.3" width="1" height="1.5" fill="#569cd6" opacity="0.55"/><rect x="19" y="28.3" width="1" height="1.5" fill="#569cd6" opacity="0.55"/><rect x="20" y="28.3" width="1" height="1.5" fill="#569cd6" opacity="0.55"/><rect x="21" y="28.3" width="1" height="1.5" fill="#d4d4d4" opacity="0.55"/><rect x="12" y="30.3" width="1" height="1.5" fill="#569cd6" opacity="0.55"/><rect x="13" y="30.3" width="1" height="1.5" fill="#569cd6" opacity="0.55"/><rect x="14" y="30.3" width="1" height="1.5" fill="#569cd6" opacity="0.55"/><rect x="15" y="30.3" width="1" height="1.5" fill="#569cd6" opacity="0.55"/><rect x="16" y="30.3" width="1" height="1.5" fill="#d4d4d4" opacity="0.55"/><rect x="16" y="32.3" width="1" height="1.5" fill="#d4d4d4" opacity="0.55"/><rect x="17" y="32.3" width="1" height="1.5" fill="#d4d4d4" opacity="0.55"/><rect x="18" y="32.3" width="1" height="1.5" fill="#d4d4d4" opacity="0.55"/><rect x="19" y="32.3" width="1" height="1.5" fill="#d4d4d4" opacity="0.55"/><rect x="20" y="32.3" width="1" height="1.5" fill="#d4d4d4" opacity="0.55"/><rect x="21" y="32.3" width="1" height="1.5" fill="#d4d4d4" opacity="0.55"/><rect x="12" y="34.3" width="1" height="1.5" fill="#d4d4d4" opacity="0.55"/><rect x="12" y="36.3" width="1" height="1.5" fill="#d4d4d4" opacity="0.55"/><rect x="12" y="38.3" width="1" height="1.5" fill="#569cd6" opacity="0.55"/><rect x="13" y="38.3" width="1" height="1.5" fill="#569cd6" opacity="0.55"/><rect x="14" y="38.3" width="1" height="1.5" fill="#d4d4d4" opacity="0.55"/><rect x="15" y="38.3" width="1" height="1.5" fill="#d4d4d4" opacity="0.55"/><rect x="16" y="38.3" width="1" height="1.5" fill="#d4d4d4" opacity="0.55"/><rect x="17" y="38.3" width="1" height="1.5" fill="#d4d4d4" opacity="0.55"/><rect x="18" y="38.3" width="1" height="1.5" fill="#d4d4d4" opacity="0.55"/><rect x="19" y="38.3" width="1" height="1.5" fill="#d4d4d4" opacity="0.55"/><rect x="20" y="38.3" width="1" height="1.5" fill="#d4d4d4" opacity="0.55"/><rect x="21" y="38.3" width="1" height="1.5" fill="#d4d4d4" opacity="0.55"/><rect x="22" y="38.3" width="1" height="1.5" fill="#d4d4d4" opacity="0.55"/><rect x="23" y="38.3" width="1" height="1.5" fill="#d4d4d4" opacity="0.55"/><rect x="24" y="38.3" width="1" height="1.5" fill="#d4d4d4" opacity="0.55"/><rect x="25" y="38.3" width="1" height="1.5" fill="#d4d4d4" opacity="0.55"/><rect x="26" y="38.3" width="1" height="1.5" fill="#d4d4d4" opacity="0.55"/><rect x="27" y="38.3" width="1" height="1.5" fill="#d4d4d4" opacity="0.55"/><rect x="28" y="38.3" width="1" height="1.5" fill="#d4d4d4" opacity="0.55"/><rect x="29" y="38.3" width="1" height="1.5" fill="#d4d4d4" opacity="0.55"/><rect x="30" y="38.3" width="1" height="1.5" fill="#d4d4d4" opacity="0.55"/><rect x="31" y="38.3" width="1" height="1.5" fill="#d4d4d4" opacity="0.55"/><rect x="32" y="38.3" width="1" height="1.5" fill="#d4d4d4" opacity="0.55"/><rect x="33" y="38.3" width="1" height="1.5" fill="#d4d4d4" opacity="0.55"/><rect x="34" y="38.3" width="1" height="1.5" fill="#d4d4d4" opacity="0.55"/><rect x="16" y="40.3" width="1" height="1.5" fill="#569cd6" opacity="0.55"/><rect x="17" y="40.3" width="1" height="1.5" fill="#569cd6" opacity="0.55"/><rect x="18" y="40.3" width="1" height="1.5" fill="#569cd6" opacity="0.55"/><rect x="19" y="40.3" width="1" height="1.5" fill="#569cd6" opacity="0.55"/><rect x="20" y="40.3" width="1" height="1.5" fill="#569cd6" opacity="0.55"/><rect x="21" y="40.3" width="1" height="1.5" fill="#d4d4d4" opacity="0.55"/><rect x="12" y="42.3" width="1" height="1.5" fill="#d4d4d4" opacity="0.55"/><rect x="12" y="44.3" width="1" height="1.5" fill="#569cd6" opacity="0.55"/><rect x="13" y="44.3" width="1" height="1.5" fill="#569cd6" opacity="0.55"/><rect x="14" y="44.3" width="1" height="1.5" fill="#569cd6" opacity="0.55"/><rect x="15" y="44.3" width="1" height="1.5" fill="#569cd6" opacity="0.55"/><rect x="12" y="46.3" width="1" height="1.5" fill="#d4d4d4" opacity="0.55"/><rect x="16" y="48.3" width="1" height="1.5" fill="#d4d4d4" opacity="0.55"/><rect x="17" y="48.3" width="1" height="1.5" fill="#d4d4d4" opacity="0.55"/><rect x="18" y="48.3" width="1" height="1.5" fill="#d4d4d4" opacity="0.55"/><rect x="19" y="48.3" width="1" height="1.5" fill="#d4d4d4" opacity="0.55"/><rect x="20" y="48.3" width="1" height="1.5" fill="#d4d4d4" opacity="0.55"/><rect x="21" y="48.3" width="1" height="1.5" fill="#d4d4d4" opacity="0.55"/><rect x="12" y="52.3" width="1" height="1.5" fill="#d4d4d4" opacity="0.55"/><rect x="8" y="54.3" width="1" height="1.5" fill="#d4d4d4" opacity="0.55"/><rect x="8" y="56.3" width="1" height="1.5" fill="#d4d4d4" opacity="0.55"/><rect x="9" y="56.3" width="1" height="1.5" fill="#d4d4d4" opacity="0.55"/><rect x="10" y="56.3" width="1" height="1.5" fill="#d4d4d4" opacity="0.55"/><rect x="11" y="56.3" width="1" height="1.5" fill="#d4d4d4" opacity="0.55"/><rect x="12" y="56.3" width="1" height="1.5" fill="#d4d4d4" opacity="0.55"/><rect x="13" y="56.3" width="1" height="1.5" fill="#d4d4d4" opacity="0.55"/><rect x="14" y="56.3" width="1" height="1.5" fill="#d4d4d4" opacity="0.55"/><rect x="15" y="56.3" width="1" height="1.5" fill="#d4d4d4" opacity="0.55"/><rect x="16" y="56.3" width="1" height="1.5" fill="#d4d4d4" opacity="0.55"/><rect x="17" y="56.3" width="1" height="1.5" fill="#d4d4d4" opacity="0.55"/><rect x="19" y="56.3" width="1" height="1.5" fill="#d4d4d4" opacity="0.55"/><rect x="20" y="56.3" width="1" height="1.5" fill="#d4d4d4" opacity="0.55"/><rect x="21" y="56.3" width="1" height="1.5" fill="#d4d4d4" opacity="0.55"/><rect x="22" y="56.3" width="1" height="1.5" fill="#d4d4d4" opacity="0.55"/><rect x="23" y="56.3" width="1" height="1.5" fill="#d4d4d4" opacity="0.55"/><rect x="24" y="56.3" width="1" height="1.5" fill="#d4d4d4" opacity="0.55"/><rect x="25" y="56.3" width="1" height="1.5" fill="#d4d4d4" opacity="0.55"/><rect x="26" y="56.3" width="1" height="1.5" fill="#d4d4d4" opacity="0.55"/><rect x="27" y="56.3" width="1" height="1.5" fill="#d4d4d4" opacity="0.55"/><rect x="28" y="56.3" width="1" height="1.5" fill="#d4d4d4" opacity="0.55"/><rect x="29" y="56.3" width="1" height="1.5" fill="#d4d4d4" opacity="0.55"/><rect x="4" y="58.3" width="1" height="1.5" fill="#d4d4d4" opacity="0.55"/><rect x="4" y="62.3" width="1" height="1.5" fill="#569cd6" opacity="0.55"/><rect x="5" y="62.3" width="1" height="1.5" fill="#569cd6" opacity="0.55"/><rect x="6" y="62.3" width="1" height="1.5" fill="#569cd6" opacity="0.55"/><rect x="7" y="62.3" width="1" height="1.5" fill="#569cd6" opacity="0.55"/><rect x="8" y="62.3" width="1" height="1.5" fill="#569cd6" opacity="0.55"/><rect x="9" y="62.3" width="1" height="1.5" fill="#569cd6" opacity="0.55"/><rect x="11" y="62.3" width="1" height="1.5" fill="#b5cea8" opacity="0.55"/><rect x="12" y="62.3" width="1" height="1.5" fill="#d4d4d4" opacity="0.55"/><rect x="0" y="64.3" width="1" height="1.5" fill="#d4d4d4" opacity="0.55"/></svg>
<svg class="b" style="left:705px;top:775px" width="35" height="30"><path d="M11.2 18.4L17 12.6L22.8 18.4" stroke="#fff" stroke-width="3.6" fill="none" stroke-linecap="butt" stroke-linejoin="round"/></svg>
<div class="t" style="left:733.85px;top:781.09px;font-size:21.51px;line-height:21.51px;color:#fff;font-weight:700;font-family:'Liberation Sans', sans-serif;transform:scaleX(0.9369);transform-origin:0 0;-webkit-text-stroke:0.35px currentColor;">Provide Custom Input</div>
<div class="b" style="left:1379px;top:760px;width:217px;height:59px;box-sizing:border-box;border:2px solid #f4744a;border-radius:30px"></div>
<div class="t" style="left:1403.07px;top:780.63px;font-size:20.64px;line-height:20.64px;color:#f4744a;font-weight:700;font-family:'Liberation Sans', sans-serif;transform:scaleX(0.9788);transform-origin:0 0;-webkit-text-stroke:0.35px currentColor;">Compile and Test</div>
<div class="b" style="left:1622px;top:762px;width:172px;height:56px;border-radius:28px;background:linear-gradient(90deg,#e6504b,#fc8230)"></div>
<div class="t" style="left:1644.41px;top:780.63px;font-size:20.64px;line-height:20.64px;color:#fff;font-weight:700;font-family:'Liberation Sans', sans-serif;transform:scaleX(1.0002);transform-origin:0 0;-webkit-text-stroke:0.35px currentColor;">Submit Code</div>
<div class="b" style="left:716px;top:851px;width:1078px;height:131px;background:#2a2d35;"></div>
<svg class="b" style="left:710px;top:850px" width="30" height="30"><path d="M9.3 9.6H18.3L13.9 15.2C16.9 15.0 19.1 17.0 19.1 19.5C19.1 22.1 16.9 23.5 14.1 23.5C11.9 23.5 10.3 22.6 9.4 21.2" stroke="#fff" stroke-width="1.6" fill="none" stroke-linejoin="miter"/></svg>
<svg class="b" style="left:1781px;top:968px" width="14" height="14"><path d="M12.5 2.5L2.5 12.5M12.5 8.5L8.5 12.5" stroke="#111" stroke-width="2.4" opacity="0.5"/><path d="M12.5 2.5L2.5 12.5M12.5 8.5L8.5 12.5" stroke="#cfcfcf" stroke-width="1.1"/></svg>
</body></html>
